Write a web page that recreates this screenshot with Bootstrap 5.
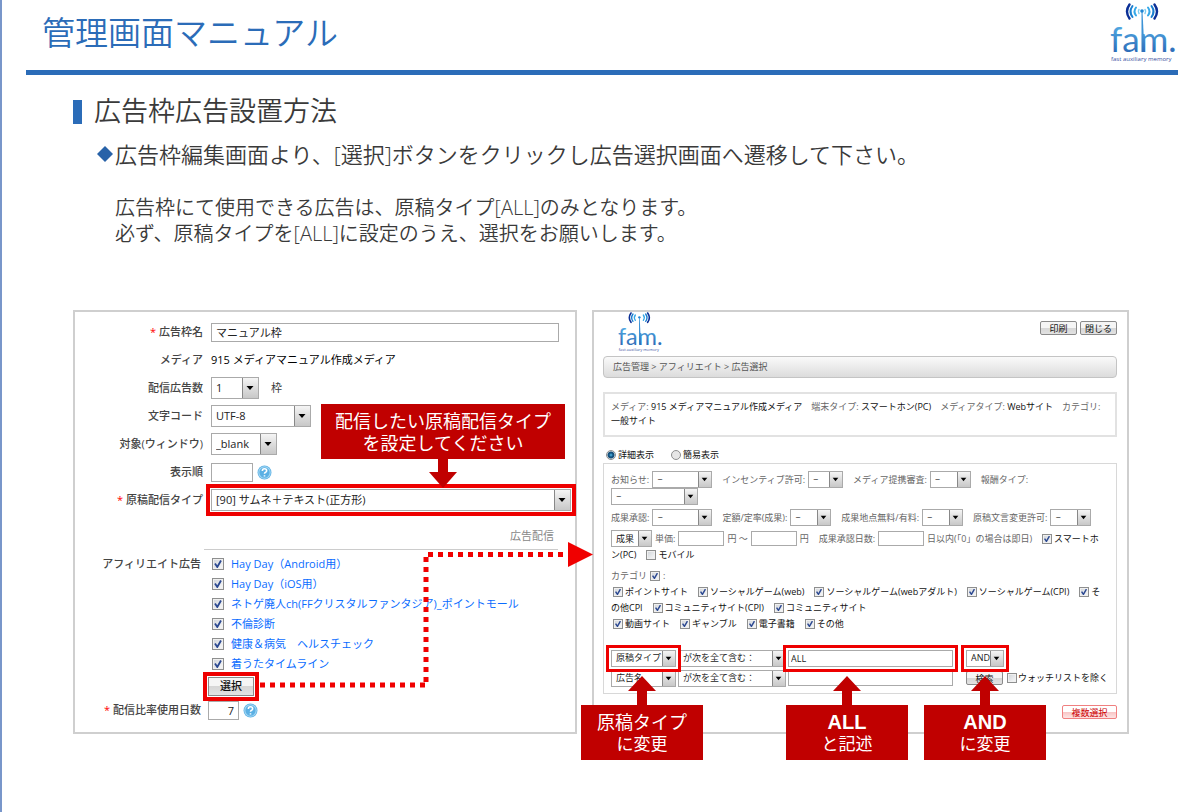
<!DOCTYPE html>
<html lang="ja">
<head>
<meta charset="utf-8">
<meta name="viewport" content="width=device-width, initial-scale=1">
<title>管理画面マニュアル</title>
<link href="https://cdn.jsdelivr.net/npm/bootstrap@5.3.0/dist/css/bootstrap.min.css" rel="stylesheet">
<style>
:root{--blue:#2b6cb8;--deep:#c00000;--hot:#ee0000;--line:#cfcfcf}
body{font-family:"Open Sans","Noto Sans CJK JP",sans-serif;font-weight:350;color:#3a3a3a;background:#fff;border-left:2px solid #7896ca;min-height:100vh}
.page-head{margin:0 24px;padding-left:16px;height:75px;border-bottom:5px solid var(--blue)}
.page-head h1{font-size:33px;line-height:40px;font-weight:350;color:var(--blue);padding-top:13px}
.brand-lg{width:66px;height:60px;margin:3px 2px 0 0}
.brand-sm{width:44px;height:40px}
.intro{padding:20px 71px 0}
.intro h2{font-size:27px;line-height:32px;font-weight:350;gap:12px}
.intro h2::before{content:"";width:9px;height:24px;background:var(--blue);margin-top:2px}
.lead-line{font-size:22px;line-height:28px;margin-top:13px;padding-left:24px;gap:2px}
.gem{width:16px;height:16px}
.notes{font-size:20px;line-height:26px;margin:27px 0 0 42px}
.screens{display:grid;grid-template-columns:504fr 537fr;gap:15px;padding:0 73px 0 71px;margin-top:63px}
.pane{border:2px solid var(--line);min-width:0}

select,input,button{font-family:inherit}
select,.txt{border:1px solid #aaa;border-radius:0;background:#fff;color:#222;padding:0 0 0 4px;min-width:0}
select{appearance:none;background:
 url("data:image/svg+xml,%3Csvg xmlns='http://www.w3.org/2000/svg' viewBox='0 0 16 8'%3E%3Cpath d='M4.500 2h7L8 6z' fill='%23000'/%3E%3C/svg%3E") right center/var(--aw) auto no-repeat,
 linear-gradient(90deg,#888 1px,transparent 1px) right/var(--aw) 100% no-repeat,
 linear-gradient(#f5f5f5,#ddd 50%,#c8c8c8) right/var(--aw) 100% no-repeat,#fff}
input[type=checkbox]{appearance:none;flex:none;margin:0;width:var(--cb);height:var(--cb);border:1px solid #8e8f8f;background:linear-gradient(135deg,#cfd3d8,#fafafa);box-shadow:inset 0 0 0 1px #f0f0f0}
input[type=checkbox]:checked{background:url("data:image/svg+xml,%3Csvg xmlns='http://www.w3.org/2000/svg' viewBox='0 0 10 10'%3E%3Cpath d='M2 4.500L4.300 8 8 1.500' fill='none' stroke='%232b4891' stroke-width='1.800'/%3E%3C/svg%3E") center/100% no-repeat,linear-gradient(135deg,#cfd3d8,#fafafa)}
input[type=radio]{appearance:none;flex:none;margin:0;width:10px;height:10px;border:1px solid #8e8f8f;border-radius:50%;background:#e6e6e6}
input[type=radio]:checked{background:radial-gradient(circle,#55c0ee 0,#14507c 2px,#14507c 3px,#eee 4px)}
.btn-old{border:1px solid #8a8a8a;border-radius:2px;padding:0;color:#111;background:linear-gradient(#f5f5f5 50%,#d6d6d6 50%,#e2e2e2);text-align:center}
.mark-hot{outline:4px solid var(--hot);outline-offset:1px;border-radius:0}

/* slot edit form */
.slot-pane{--aw:16px;--cb:12px;font-size:11px;font-weight:400;padding:6px 4px 0 0}
.slot-pane .fr{display:grid;grid-template-columns:128px 1fr;column-gap:8px;height:28px;align-items:center}
.slot-pane .cap{text-align:right;color:#444;font-weight:500;white-space:nowrap}
.slot-pane .cap.req::before{content:"* ";color:red}
.slot-pane select,.slot-pane .txt{height:22px;font-size:11px}
.slot-pane .txt{height:19px}
.w-count{width:48px}.w-code{width:100px}.w-win{width:66px}.w-num{width:42px}
.name-field{padding-right:12px}
.slot-pane .w-days{width:31px}
.section-cap{height:36px;margin:0 13px 4px 129px;padding:13px 4px 0 0;line-height:18px;border-bottom:1px solid #ccc;text-align:right;color:#888}
.ads{display:grid;grid-template-columns:126px 1fr;column-gap:7px}
.ads .cap{line-height:20px}
.ads li{height:20px;padding-left:4px;gap:7px;color:#06f}
.ads li a{color:#0a6cff;text-decoration:none}
.pick{width:46px;height:19px;font-size:11px;line-height:16px;font-weight:500}
.act{height:24px}
.help-dot{width:15px;height:15px}
.route{position:absolute;left:185px;top:230px;width:calc(100% - 167px);height:150px;z-index:3;pointer-events:none}

/* callouts */
.tip-down,.tip-up{position:absolute;z-index:4;display:flex;flex-direction:column;align-items:center;color:#fff;text-align:center;white-space:nowrap;font-weight:400}
.tip-down{left:110px;bottom:23px}
.tip-down svg,.tip-up svg{width:28px;height:29px;fill:var(--deep)}
.tip-body{background:var(--deep);font-size:18px;line-height:22px}
.tip-down .tip-body{width:244px;padding:6px 0 5px}
.tip-up{top:26px;width:122px}
.tip-up .tip-body{width:122px;padding:6px 0 5px}
.tip-up small{display:block;font-size:17px}
.tip-up strong{display:block;font:bold 20px/22px "Liberation Sans",sans-serif}
.tip-type{left:-30px}.tip-word{left:-2px}.tip-and{left:-42px}

/* ad picker */
.pick-pane{--aw:13px;--cb:10px;font-size:9px;line-height:14px;font-weight:400;color:#666;padding:0 10px 0 9px}
.pick-pane select,.pick-pane .txt{font-size:9px;height:17px}
.pick-pane .txt{height:15px;padding-left:2px}
.pick-pane b{font-weight:400;color:#111}
.top-bar{height:44px;padding-left:15px}
.top-bar .btn-old{width:37px;height:14px;font-size:9px;line-height:11px;margin-top:9px}
.top-btns{gap:3px}
.crumbs{height:22px;border:1px solid #c4c4c4;border-radius:4px;background:linear-gradient(#fafafa,#dcdcdc);padding:3px 9px;color:#555}
.info{height:45px;border:2px solid #e2e2e2;margin-top:14px;padding:6px 6px 0;white-space:nowrap}
.view{height:26px;padding:11px 3px 0;gap:17px;color:#111}
.view label,.ck{display:inline-flex;align-items:center;gap:2px;color:#111}
.cond{border:1px solid #d8d8d8;padding:7px 0 5px 7px;white-space:nowrap}
.line{display:flex;align-items:center;height:17px;gap:3px}
.line .nx{margin-left:7px}
.line.cks{height:16px;gap:10px}
.inset{padding-left:2px}
.s60{width:60px}.s34{width:35px}.s41{width:41px}.s86{width:87px}.t46{width:46px}
.find{display:grid;grid-template-columns:65px 108px 165px 1fr;column-gap:2px;height:20px;align-items:center}
.find>.holder{position:relative;display:flex}
.find select,.find .txt{width:100%}
.find .mark-hot{outline-width:3px;outline-offset:2px;height:17px}
.find .ops{padding-left:11px;gap:4px}
.find .ops select{width:38px}
.find .ops .ck{gap:1px}
.go{width:37px;height:14px;font-size:9px;line-height:11px}
.pane-foot{padding:11px 0 13px}
.many{width:55px;height:14px;font-size:9px;line-height:11px;color:#c00;border:1px solid #f08080;background:linear-gradient(#fff 50%,#f8c4c4 50%,#fde4e4)}
</style>
</head>
<body>
<svg width="0" height="0" class="position-absolute" aria-hidden="true">
  <defs>
    <linearGradient id="famg" x1="0" y1="0" x2="0" y2="1"><stop offset=".1" stop-color="#58b4ea"/><stop offset=".9" stop-color="#2a66b4"/></linearGradient>
  </defs>
</svg>

<header class="page-head d-flex justify-content-between align-items-start">
  <h1 class="mb-0">管理画面マニュアル</h1>
  <svg class="brand-lg" viewBox="0 0 66 60" role="img" aria-label="fam.">
    <g fill="none" stroke-linecap="round">
      <path d="M26 4.500q-3 4 0 8M38 4.500q3 4 0 8" stroke="#35a8e8" stroke-width="2"/>
      <path d="M22.500 3q-4 5.500 0 11M41.500 3q4 5.500 0 11" stroke="#1a7fd0" stroke-width="2"/>
      <path d="M19.500 1.500q-5 7 0 14M44.500 1.500q5 7 0 14" stroke="#0b2f96" stroke-width="2.400"/>
      <path d="M29 6.500q-1.500 2 0 4M35 6.500q1.500 2 0 4" stroke="#7cccf0" stroke-width="1.500"/>
    </g>
    <path d="M31.500 8h1L34.500 49h-3z" fill="#3d93d6"/>
    <circle cx="32" cy="8" r="1.800" fill="#1f86d4"/>
    <text x="0" y="49" font-family="Lato" font-weight="400" font-size="35" fill="url(#famg)">fam.</text>
    <text x="1" y="58" font-family="Open Sans" font-weight="500" font-size="6" fill="#3a4fa0">fast auxiliary memory</text>
  </svg>
</header>

<section class="intro">
  <h2 class="d-flex align-items-center mb-0">広告枠広告設置方法</h2>
  <p class="lead-line d-flex align-items-center mb-0">
    <svg class="gem" viewBox="0 0 16 16"><path d="M8 0l8 8-8 8-8-8z" fill="#2862a8"/></svg>
    <span>広告枠編集画面より、[選択]ボタンをクリックし広告選択画面へ遷移して下さい。</span>
  </p>
  <p class="notes mb-0">広告枠にて使用できる広告は、原稿タイプ[ALL]のみとなります。<br>必ず、原稿タイプを[ALL]に設定のうえ、選択をお願いします。</p>
</section>

<main class="screens">
  <section class="pane slot-pane position-relative">
    <div class="fr"><label class="cap req" for="f1">広告枠名</label><div class="name-field"><input id="f1" class="txt w-100" value="マニュアル枠"></div></div>
    <div class="fr"><span class="cap">メディア</span><span class="text-black">915 メディアマニュアル作成メディア</span></div>
    <div class="fr"><label class="cap" for="f2">配信広告数</label><div class="d-flex align-items-center gap-2"><select id="f2" class="w-count"><option>1</option></select><span class="ms-1">枠</span></div></div>
    <div class="fr"><label class="cap" for="f3">文字コード</label><div class="d-flex"><select id="f3" class="w-code"><option>UTF-8</option></select></div></div>
    <div class="fr"><label class="cap" for="f4">対象(ウィンドウ)</label><div class="d-flex"><select id="f4" class="w-win"><option>_blank</option></select></div></div>
    <div class="fr"><label class="cap" for="f5">表示順</label><div class="d-flex align-items-center gap-1"><input id="f5" class="txt w-num">
      <svg class="help-dot" viewBox="0 0 14 14"><circle cx="7" cy="7" r="6.500" fill="#5bb0e4"/><circle cx="7" cy="7" r="5.300" fill="none" stroke="#a5d8f4" stroke-width="1"/><path d="M5 5.500q0-2 2-2t2 1.800q0 1-1 1.500-1 .4-1 1.400M7 9.500v1.300" fill="none" stroke="#fff" stroke-width="1.500"/></svg></div></div>
    <div class="fr"><label class="cap req" for="f6">原稿配信タイプ</label>
      <div class="position-relative d-flex"><select id="f6" class="w-100 mark-hot"><option>[90] サムネ＋テキスト(正方形)</option></select>
        <div class="tip-down"><div class="tip-body">配信したい原稿配信タイプ<br>を設定してください</div><svg viewBox="0 0 28 29"><path d="M9 0h10v13h9L14 29 0 13h9z"/></svg></div>
      </div>
    </div>
    <div class="section-cap">広告配信</div>
    <div class="ads">
      <span class="cap">アフィリエイト広告</span>
      <ul class="list-unstyled mb-0">
        <li class="d-flex align-items-center"><input type="checkbox" checked aria-labelledby="a1"><a id="a1" href="#">Hay Day（Android用）</a></li>
        <li class="d-flex align-items-center"><input type="checkbox" checked aria-labelledby="a2"><a id="a2" href="#">Hay Day（iOS用）</a></li>
        <li class="d-flex align-items-center"><input type="checkbox" checked aria-labelledby="a3"><a id="a3" href="#">ネトゲ廃人ch(FFクリスタルファンタジア)_ポイントモール</a></li>
        <li class="d-flex align-items-center"><input type="checkbox" checked aria-labelledby="a4"><a id="a4" href="#">不倫診断</a></li>
        <li class="d-flex align-items-center"><input type="checkbox" checked aria-labelledby="a5"><a id="a5" href="#">健康＆病気　ヘルスチェック</a></li>
        <li class="d-flex align-items-center"><input type="checkbox" checked aria-labelledby="a6"><a id="a6" href="#">着うたタイムライン</a></li>
      </ul>
      <span></span>
      <div class="act d-flex align-items-center"><button type="button" class="btn-old pick mark-hot">選択</button></div>
      <label class="cap req align-self-center" for="f7">配信比率使用日数</label>
      <div class="act d-flex align-items-center gap-1"><input id="f7" class="txt w-days text-end pe-1" value="7">
        <svg class="help-dot" viewBox="0 0 14 14"><circle cx="7" cy="7" r="6.500" fill="#5bb0e4"/><circle cx="7" cy="7" r="5.300" fill="none" stroke="#a5d8f4" stroke-width="1"/><path d="M5 5.500q0-2 2-2t2 1.800q0 1-1 1.500-1 .4-1 1.400M7 9.500v1.300" fill="none" stroke="#fff" stroke-width="1.500"/></svg></div>
    </div>
    <svg class="route" aria-hidden="true">
      <g stroke="#f00000" stroke-width="5" stroke-dasharray="5 5">
        <line x1="0" y1="143" x2="165" y2="143"/>
        <line x1="166" y1="140" x2="166" y2="15"/>
        <line x1="168" y1="12.500" x2="93%" y2="12.500"/>
      </g>
      <svg x="100%" overflow="visible"><path d="M-25 0v25L0 12.500z" fill="#f00000"/></svg>
    </svg>
  </section>

  <section class="pane pick-pane">
    <div class="top-bar d-flex justify-content-between">
      <svg class="brand-sm" viewBox="0 0 66 60" role="img" aria-label="fam.">
        <g fill="none" stroke-linecap="round">
          <path d="M26 4.500q-3 4 0 8M38 4.500q3 4 0 8" stroke="#35a8e8" stroke-width="2"/>
          <path d="M22.500 3q-4 5.500 0 11M41.500 3q4 5.500 0 11" stroke="#1a7fd0" stroke-width="2"/>
          <path d="M19.500 1.500q-5 7 0 14M44.500 1.500q5 7 0 14" stroke="#0b2f96" stroke-width="2.400"/>
        </g>
        <path d="M31.500 8h1L34.500 49h-3z" fill="#3d93d6"/>
        <circle cx="32" cy="8" r="1.800" fill="#1f86d4"/>
        <text x="0" y="49" font-family="Lato" font-weight="400" font-size="35" fill="url(#famg)">fam.</text>
        <text x="1" y="58" font-family="Open Sans" font-weight="500" font-size="6" fill="#3a4fa0">fast auxiliary memory</text>
      </svg>
      <div class="d-flex top-btns"><button type="button" class="btn-old">印刷</button><button type="button" class="btn-old">閉じる</button></div>
    </div>
    <nav class="crumbs">広告管理 &gt; アフィリエイト &gt; 広告選択</nav>
    <div class="info">メディア: <b>915 メディアマニュアル作成メディア</b>　端末タイプ: <b>スマートホン(PC)</b>　メディアタイプ: <b>Webサイト</b>　カテゴリ:<br><b>一般サイト</b></div>
    <div class="view d-flex align-items-start"><label><input type="radio" name="v" checked>詳細表示</label><label><input type="radio" name="v">簡易表示</label></div>
    <form class="cond" onsubmit="return false">
      <div class="line"><label for="c1">お知らせ:</label><select id="c1" class="s60"><option>−</option></select><label class="nx" for="c2">インセンティブ許可:</label><select id="c2" class="s34"><option>−</option></select><label class="nx" for="c3">メディア提携審査:</label><select id="c3" class="s41"><option>−</option></select><label class="nx" for="c4">報酬タイプ:</label></div>
      <div class="line"><select id="c4" class="s86"><option>−</option></select></div>
      <div class="line mt-1"><label for="c5">成果承認:</label><select id="c5" class="s60"><option>−</option></select><label class="nx" for="c6">定額/定率(成果):</label><select id="c6" class="s41"><option>−</option></select><label class="nx" for="c7">成果地点無料/有料:</label><select id="c7" class="s41"><option>−</option></select><label class="nx" for="c8">原稿文言変更許可:</label><select id="c8" class="s41"><option>−</option></select></div>
      <div class="line mt-1"><select aria-label="種別" class="s41"><option>成果</option></select><label for="c9">単価:</label><input id="c9" class="txt t46"><span>円 ～</span><input aria-label="単価上限" class="txt t46"><span>円</span><label class="nx" for="c10">成果承認日数:</label><input id="c10" class="txt t46"><span>日以内(「0」の場合は即日)</span><label class="ck nx"><input type="checkbox" id="c11" checked>スマートホ</label></div>
      <div class="line cks"><label class="ck" for="c11">ン(PC)</label><label class="ck"><input type="checkbox">モバイル</label></div>
      <div class="line mt-1"><label for="c12">カテゴリ</label><input type="checkbox" id="c12" checked><span>:</span></div>
      <div class="line cks inset"><label class="ck"><input type="checkbox" checked>ポイントサイト</label><label class="ck"><input type="checkbox" checked>ソーシャルゲーム(web)</label><label class="ck"><input type="checkbox" checked>ソーシャルゲーム(webアダルト)</label><label class="ck"><input type="checkbox" checked>ソーシャルゲーム(CPI)</label><label class="ck"><input type="checkbox" id="c13" checked>そ</label></div>
      <div class="line cks"><label class="ck" for="c13">の他CPI</label><label class="ck"><input type="checkbox" checked>コミュニティサイト(CPI)</label><label class="ck"><input type="checkbox" checked>コミュニティサイト</label></div>
      <div class="line cks inset"><label class="ck"><input type="checkbox" checked>動画サイト</label><label class="ck"><input type="checkbox" checked>ギャンブル</label><label class="ck"><input type="checkbox" checked>電子書籍</label><label class="ck"><input type="checkbox" checked>その他</label></div>
      <div class="find mt-3">
        <div class="holder"><select aria-label="項目1" class="mark-hot"><option>原稿タイプ</option></select>
          <div class="tip-up tip-type"><svg viewBox="0 0 28 29"><path d="M14 0l14 15h-9v14H9V15H0z"/></svg><div class="tip-body">原稿タイプ<small>に変更</small></div></div></div>
        <select aria-label="条件1"><option>が次を全て含む：</option></select>
        <div class="holder"><input aria-label="語句1" class="txt mark-hot" value="ALL">
          <div class="tip-up tip-word"><svg viewBox="0 0 28 29"><path d="M14 0l14 15h-9v14H9V15H0z"/></svg><div class="tip-body"><strong>ALL</strong><small>と記述</small></div></div></div>
        <div class="ops d-flex"><div class="position-relative d-flex"><select aria-label="結合" class="mark-hot"><option>AND</option></select>
          <div class="tip-up tip-and"><svg viewBox="0 0 28 29"><path d="M14 0l14 15h-9v14H9V15H0z"/></svg><div class="tip-body"><strong>AND</strong><small>に変更</small></div></div></div></div>
      </div>
      <div class="find">
        <select aria-label="項目2"><option>広告名</option></select>
        <select aria-label="条件2"><option>が次を全て含む：</option></select>
        <input aria-label="語句2" class="txt">
        <div class="ops d-flex align-items-center"><button type="submit" class="btn-old go">検索</button><label class="ck"><input type="checkbox">ウォッチリストを除く</label></div>
      </div>
    </form>
    <div class="pane-foot d-flex justify-content-end"><button type="button" class="btn-old many">複数選択</button></div>
  </section>
</main>
<script src="https://cdn.jsdelivr.net/npm/bootstrap@5.3.0/dist/js/bootstrap.bundle.min.js"></script>
</body>
</html>
